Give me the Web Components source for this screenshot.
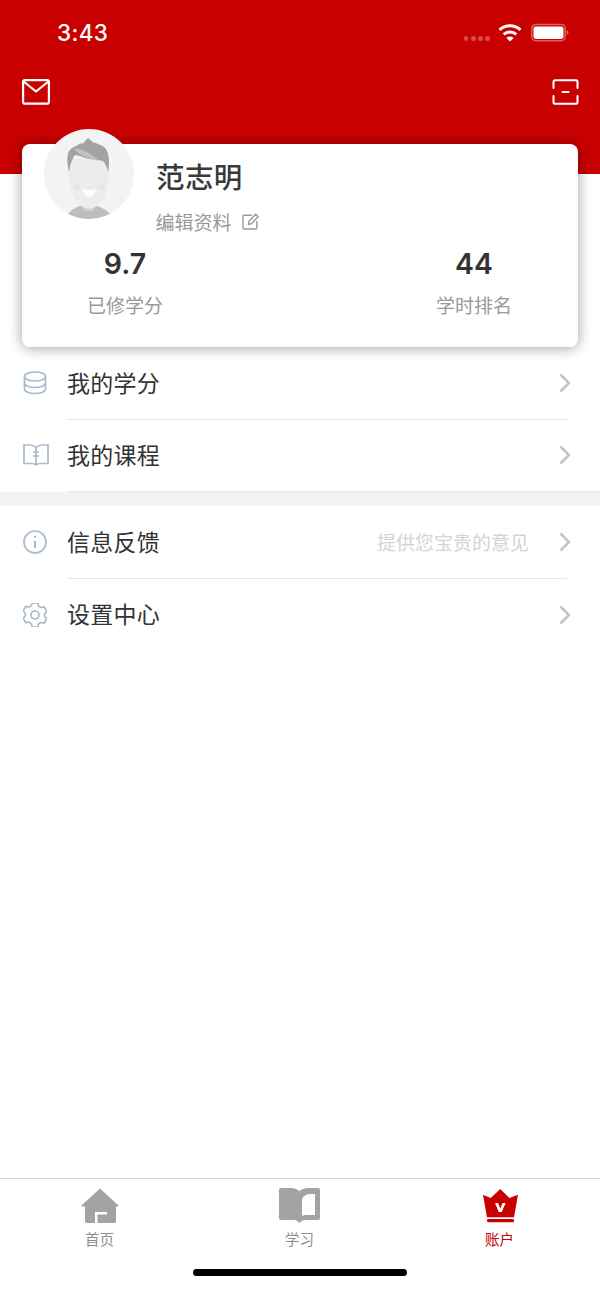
<!DOCTYPE html>
<html lang="zh"><head><meta charset="utf-8"><style>
html,body{margin:0;padding:0;background:#fff}
body{width:600px;height:1299px;overflow:hidden;font-family:"Noto Sans CJK SC","Noto Sans",sans-serif}
</style></head><body>
<app-screen>
  <app-header></app-header>
  <profile-card name="范志明"></profile-card>
  <menu-group>
    <menu-row icon="db" label="我的学分" divider></menu-row>
    <menu-row icon="book" label="我的课程" short divider></menu-row>
  </menu-group>
  <menu-group second>
    <menu-row icon="info" label="信息反馈" hint="提供您宝贵的意见" divider></menu-row>
    <menu-row icon="gear" label="设置中心" lift></menu-row>
  </menu-group>
  <tab-bar></tab-bar>
</app-screen>
<script>
const def=(n,html)=>customElements.define(n,class extends HTMLElement{connectedCallback(){if(this.shadowRoot)return;const r=this.attachShadow({mode:'open'});r.innerHTML=typeof html==='function'?html(this):html;}});
def('app-screen',`<style>:host{display:flex;flex-direction:column;height:1299px;width:600px}</style><slot></slot>`);
def('app-header',`<style>
:host{display:block;height:174px;background:#c80000;color:#fff;flex:none}
.status{height:66px;display:flex}
.time{font:500 22.5px/1 Inter,"Liberation Sans",sans-serif;margin:22px 0 0 57px;letter-spacing:.35px;height:24px}
.right{margin-left:auto;display:flex;align-items:flex-start;padding:23px 31px 0 0}
.dots{display:flex;gap:2.6px;margin:13px 8px 0 0}
.dots i{width:4.6px;height:4.6px;border-radius:50%;background:#d94a4a}
.bar{display:flex;justify-content:space-between;padding:13px 21px 0 22px}
svg{display:block}
</style>
<div class="status"><div class="time">3:43</div><div class="right">
<div class="dots"><i></i><i></i><i></i><i></i></div>
<svg width="24" height="18" viewBox="0 0 24 18" style="margin:1px 9px 0 0"><path d="M12 17.500L8.400 13.900a5.200 5.200 0 0 1 7.200 0z" fill="#fff"/><path d="M5.700 10.300a9.400 9.400 0 0 1 12.600 0M1.500 5.800a15.400 15.400 0 0 1 21 0" fill="none" stroke="#fff" stroke-width="3"/></svg>
<svg width="38" height="20" viewBox="0 0 38 20"><rect x=".8" y="1.400" width="33.400" height="16.400" rx="4.200" fill="none" stroke="#e06060" stroke-width="1.500"/><rect x="2.500" y="3.400" width="30" height="12.500" rx="2.400" fill="#fff"/><path d="M35.600 7v5a2.600 2.600 0 0 0 0-5z" fill="#e06060"/></svg>
</div></div>
<div class="bar">
<svg width="28" height="26" viewBox="0 0 28 26" fill="none" stroke="#fff" stroke-width="2.200" stroke-linejoin="round"><rect x="1.100" y="1.100" width="25.800" height="23.600" rx="2"/><path d="M1.600 2.500L14 12.500 26.400 2.500"/></svg>
<svg width="27" height="26" viewBox="0 0 27 26" fill="none" stroke="#fff" stroke-width="2" stroke-linecap="round" stroke-linejoin="round"><path d="M1.500 9V2.700A1.500 1.500 0 0 1 3 1.200H24A1.500 1.500 0 0 1 25.500 2.700V9M1.500 17v6.300A1.500 1.500 0 0 0 3 24.800H24a1.500 1.500 0 0 0 1.500-1.500V17M10.500 13h6"/></svg>
</div>`);
def('profile-card',h=>`<style>
:host{display:block;flex:none;margin:-30px 22px 0;height:203px;background:#fff;border-radius:8px;box-shadow:0 1px 14px rgba(0,0,0,.38);position:relative;color:#333}
.top{display:flex;height:106px}
.avatar{position:absolute;left:22px;top:-15px;width:90px;height:90px}
.info{margin-left:134px;padding-top:13px}
.name{font-size:28.500px;line-height:38px;font-weight:500;color:#3a3a3a;letter-spacing:.4px}
.edit{display:flex;align-items:center;font-size:19px;line-height:28px;color:#999;margin-top:12px;gap:10.500px}
.edit span{margin:1px 0 0 -.5px}
.stats{display:flex;justify-content:space-between;padding:0 66px 0 65px;margin-top:-4px}
.stat{text-align:center;display:flex;flex-direction:column;align-items:center}
.v{font:600 28.500px/36px Inter,"Liberation Sans",sans-serif;color:#333}
.l{font-size:19px;line-height:28px;color:#999;margin-top:9px}
</style>
<svg class="avatar" viewBox="0 0 90 90"><defs><clipPath id="c"><circle cx="45" cy="45" r="45"/></clipPath></defs>
<circle cx="45" cy="45" r="45" fill="#f1f3f5"/>
<g clip-path="url(#c)">
<path d="M22 90c2-8 8-11 14-13h17c6 2 13 5 15 13z" fill="#bdbdbd"/>
<path d="M24.500 30c0 17 1 30 5 38 4 7 10.500 12 15.500 12s11.500-5 15.500-12c4-8 5-21 5-38z" fill="#ececec"/>
<path d="M38 78c3 2 10 2 13 0l-1 3c-3 1-8 1-11 0z" fill="#d6d6d6"/>
<path d="M25 43c-2-8-2-14-1-19 2-4 5-6 8-7l4-2.500 3 0 5-5.500c2 1 3 3 5 4.500l3 .500 4 2c2 .5 4 2 6 4 3 5 4 14 2 23-1-5-3-9-5-11-5-2-14-1-20-4-3-1-6-2-8-2-3 4-5 10-6 17z" fill="#a3a3a3"/>
<path d="M30 19c7 1 18 5 25 13-8-3-20-4-25-13z" fill="#c2c2c2"/>
<circle cx="33" cy="58.300" r="3" fill="#e4e4e4"/><circle cx="58" cy="58.300" r="3" fill="#e4e4e4"/>
<path d="M38.500 60.300c4 .8 9 .8 13 0-.8 4.500-3.500 7.400-6.500 7.400s-5.700-2.900-6.500-7.400z" fill="#fff"/>
</g></svg>
<div class="top"><div class="info"><div class="name">${h.getAttribute('name')}</div>
<div class="edit"><span>编辑资料</span><svg width="17" height="17" viewBox="0 0 17 17" fill="none" stroke="#999" stroke-width="1.400" stroke-linejoin="round"><path d="M10 2.200H2a1 1 0 0 0-1 1V15a1 1 0 0 0 1 1h11.800a1 1 0 0 0 1-1V8M6.500 11.300l.5-3L13.700 1.300l2.400 2.400-6.800 7z"/></svg></div></div></div>
<div class="stats"><div class="stat"><div class="v">9.7</div><div class="l">已修学分</div></div><div class="stat"><div class="v">44</div><div class="l">学时排名</div></div></div>`);
def('menu-group',h=>`<style>:host{display:block;flex:none}${h.hasAttribute('second')?':host{border-top:14px solid #f2f3f5}':''}</style><slot></slot>`);
const ICONS={
db:`<ellipse cx="12" cy="5.500" rx="10.500" ry="4.500"/><path d="M1.500 5.500V18c0 2.500 4.700 4.500 10.500 4.500S22.500 20.500 22.500 18V5.500M1.500 12c0 2.500 4.700 4.500 10.500 4.500s10.500-2 10.500-4.500"/>`,
book:`<path d="M13 4.500c-2-2-4-2.500-6-2.500H1v18.500H9c2 0 3 .5 4 1.500 1-1 2-1.500 4-1.500h8V2H19c-2 0-4 .5-6 2.500zM13 4.500V22M10 9h6M10 13h6"/>`,
info:`<circle cx="12" cy="12" r="11"/><path d="M12 11v7" stroke-width="2"/><circle cx="12" cy="6.800" r="1.200" fill="#a9bacd" stroke="none"/>`,
gear:`<path transform="translate(0 -1.500)" d="M9.300 1.500h5.400l1 3.200 2.300 1.300 3.200-.7 2.600 4.500-2.200 2.400v2.600l2.200 2.400-2.600 4.500-3.200-.7-2.300 1.300-1 3.200H9.300l-1-3.200L6 20.500l-3.200.7L.2 16.700l2.200-2.400v-2.600L.2 9.300l2.600-4.500L6 5.500l2.300-1.300z" stroke-linejoin="round"/><circle cx="12" cy="12" r="4"/>`};
def('menu-row',h=>{const bk=h.getAttribute('icon')==='book',sh=h.hasAttribute('short'),li=h.hasAttribute('lift');return `<style>
:host{display:flex;align-items:center;height:${sh?72:73}px;position:relative;box-sizing:border-box;padding:0 29px ${sh?2:li?2:1}px 23px}
svg.i{width:${bk?26:24}px;height:24px;fill:none;stroke:#a9bacd;stroke-width:1.700;flex:none}
.t{margin-left:${bk?18:20}px;font-size:23px;color:#333;line-height:30px;letter-spacing:.25px;margin-bottom:3px}
.h{margin-left:auto;font-size:19px;color:#d4d4d4;margin-right:30px;margin-bottom:1px}
.c{flex:none;${h.hasAttribute('hint')?'':'margin-left:auto;'}}
.d{position:absolute;left:67px;right:33px;bottom:0;height:1px;background:#e6e6e6}
${sh?'.d{right:0;background:#e9eaec}':''}
</style>
<svg class="i" viewBox="0 0 ${bk?26:24} 24">${ICONS[h.getAttribute('icon')]}</svg>
<span class="t">${h.getAttribute('label')}</span>
${h.hasAttribute('hint')?`<span class="h">${h.getAttribute('hint')}</span>`:''}
<svg class="c" width="12" height="20" viewBox="0 0 12 20" fill="none" stroke="#c4c4c4" stroke-width="2.500"><path d="M1.500 1.500L10 10l-8.500 8.500"/></svg>
${h.hasAttribute('divider')?'<div class="d"></div>':''}`});
def('tab-bar',`<style>
:host{display:flex;flex-direction:column;margin-top:auto;height:121px;border-top:1px solid #d9d9d9;box-sizing:border-box;flex:none;background:#fff}
.tabs{display:grid;grid-template-columns:repeat(3,200px)}
.tab{display:flex;flex-direction:column;align-items:center;font-size:14.500px;line-height:18px;color:#8e8e8e;padding-top:8px}
.tab.on{color:#c80000}
.ic{height:37px;display:flex;align-items:center}
.tab span{margin-top:6px;margin-left:-1px}
.home{width:214px;height:7px;border-radius:4px;background:#000;align-self:center;margin-top:21px}
</style>
<div class="tabs">
<div class="tab"><div class="ic"><svg width="38" height="35" viewBox="0 0 38 35"><path fill-rule="evenodd" fill="#a3a3a3" d="M19 .5L37.500 17.500q.5 1-.5 1H35V33a2 2 0 0 1-2 2H6a2 2 0 0 1-2-2V18.500H1q-1 0-.5-1zM14 35V24H26V26.500H16.500V35z"/></svg></div><span>首页</span></div>
<div class="tab"><div class="ic"><svg width="41" height="35" viewBox="0 0 41 35" style="margin-left:-1px"><path fill-rule="evenodd" fill="#a3a3a3" d="M2 0H12c3 0 6 1 8.500 3C23 1 26 0 29 0H39a2 2 0 0 1 2 2V30a2 2 0 0 1-2 2H26c-2 0-4 1-5.500 3C19 33 17 32 15 32H2a2 2 0 0 1-2-2V2A2 2 0 0 1 2 0zM23 12c0-3 4-6 8-6H36V27H27c-2 0-3 .5-4 1z"/></svg></div><span>学习</span></div>
<div class="tab on"><div class="ic"><svg width="35" height="34" viewBox="0 0 35 34"><path fill-rule="evenodd" fill="#c80000" d="M0 5.700L7.700 9 17.300 0l9 9 8.700-3.300-4 22.600H4zM12 14h3l2.300 5.500L19.600 14h3L18.800 23h-3z"/><rect x="4" y="30" width="27" height="3.200" rx="1.200" fill="#c80000"/></svg></div><span>账户</span></div>
</div><div class="home"></div>`);
</script>
</body></html>
